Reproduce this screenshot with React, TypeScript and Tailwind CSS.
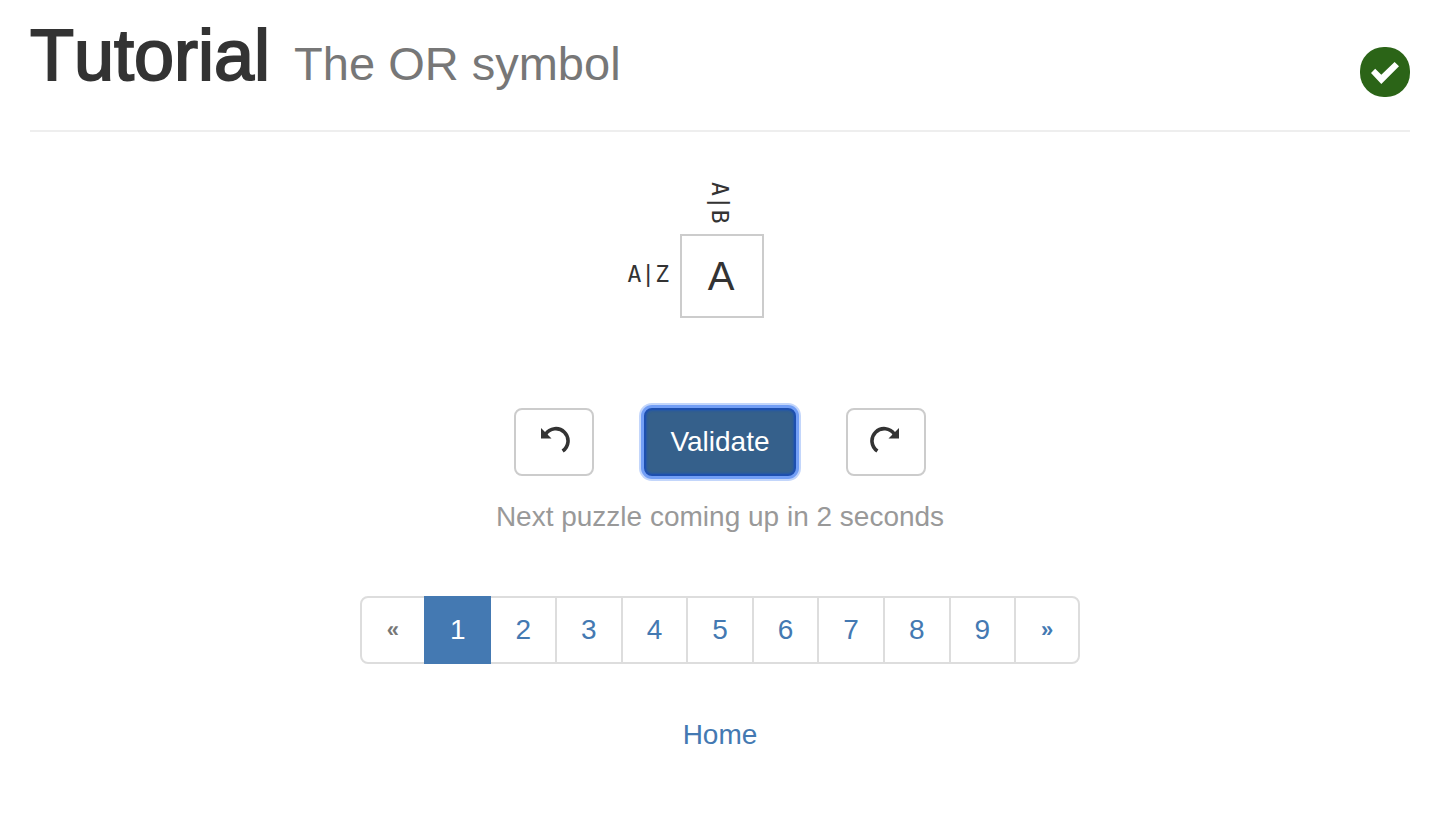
const PAGES = [1, 2, 3, 4, 5, 6, 7, 8, 9];

function UndoIcon({ flipped = false }: { flipped?: boolean }) {
  return (
    <svg
      viewBox="0 0 32 28"
      className={flipped ? "h-7 w-8 -scale-x-100" : "h-7 w-8"}
      aria-hidden="true"
    >
      <path d="M3 2V12.5H13.5Z" fill="#333" />
      <path d="M7.6 8.2A12.2 12.2 0 1 1 24.6 25" fill="none" stroke="#333" strokeWidth="3.6" />
    </svg>
  );
}

function Header() {
  return (
    <header className="flex items-start justify-between border-b-2 border-[#eee] pb-[33px] pt-[15px]">
      <h1 className="flex items-baseline gap-6 text-[72px] leading-[80px] text-[#333]">
        <span className="[-webkit-text-stroke:2px_#333] [font-kerning:none]">Tutorial</span>
        <small className="text-[47px] leading-none text-[#777]">The OR symbol</small>
      </h1>
      <span
        role="img"
        aria-label="Solved"
        className="mt-8 flex size-[50px] items-center justify-center rounded-3xl bg-[#2b6417]"
      >
        <svg viewBox="0 0 50 50" className="size-[50px]" aria-hidden="true">
          <path d="M11 26L15.2 21.7L21.3 27.8L34.6 15L39 19.3L21.3 37Z" fill="#fff" />
        </svg>
      </span>
    </header>
  );
}

function Puzzle() {
  const clue = "font-['DejaVu_Sans_Mono',monospace] text-[23px] leading-7";
  return (
    <section className="mt-12 grid grid-cols-[1fr_84px_1fr] items-center pl-1 text-[#333]">
      <div className="col-start-2 flex h-[54px] items-start justify-center pr-1 pt-0.5">
        <span className={`${clue} [writing-mode:vertical-rl]`}>A|B</span>
      </div>
      <div className={`${clue} col-start-1 pb-1 pr-[11px] text-right`}>A|Z</div>
      <input
        aria-label="Answer"
        defaultValue="A"
        maxLength={1}
        className="size-[84px] border-2 border-[#ccc] bg-white pr-0.5 text-center text-[40px] outline-none"
      />
    </section>
  );
}

function Controls() {
  const side =
    "flex h-[68px] w-20 items-start justify-center rounded-lg border-2 border-[#ccc] bg-white pt-4";
  return (
    <div className="mt-[90px] flex justify-center gap-[50px]">
      <button type="button" aria-label="Undo" className={side}>
        <UndoIcon />
      </button>
      <button
        type="button"
        className="h-[68px] rounded-lg border-2 border-[#1d4fae] bg-[#35608b] px-6 text-[28px] leading-10 text-white shadow-[0_0_0_3px_#729ef5,0_0_0_5px_#c3d6fb,inset_0_0_2px_1px_#2459a8]"
      >
        Validate
      </button>
      <button type="button" aria-label="Redo" className={side}>
        <UndoIcon flipped />
      </button>
    </div>
  );
}

function Pagination() {
  const cell = "-ml-0.5 block border-2 py-3 leading-10";
  const arrow = "px-[25px] text-[22px] font-bold border-[#ddd]";
  return (
    <nav aria-label="Puzzles" className="mt-[59px] flex justify-center">
      <ul className="flex pl-0.5 text-[28px] text-[#4479b2]">
        <li>
          <a
            href="#previous"
            aria-label="Previous"
            className={`${cell} ${arrow} rounded-l-lg text-[#777]`}
          >
            «
          </a>
        </li>
        {PAGES.map((page) => (
          <li key={page} className={page === 1 ? "relative z-10" : ""}>
            <a
              href={`#puzzle-${page}`}
              aria-current={page === 1 ? "page" : undefined}
              className={`${cell} px-6 ${
                page === 1 ? "border-[#4479b2] bg-[#4479b2] text-white" : "border-[#ddd]"
              }`}
            >
              {page}
            </a>
          </li>
        ))}
        <li>
          <a href="#next" aria-label="Next" className={`${cell} ${arrow} rounded-r-lg`}>
            »
          </a>
        </li>
      </ul>
    </nav>
  );
}

export default function App() {
  return (
    <main className="bg-white pl-[30px] pr-7 font-['Liberation_Sans',Arial,sans-serif]">
      <Header />
      <Puzzle />
      <Controls />
      <p className="mt-[21px] text-center text-[28px] leading-10 text-[#999]">
        Next puzzle coming up in 2 seconds
      </p>
      <Pagination />
      <p className="mt-[51px] text-center text-[28px] leading-10">
        <a href="#home" className="text-[#4479b2]">
          Home
        </a>
      </p>
    </main>
  );
}
